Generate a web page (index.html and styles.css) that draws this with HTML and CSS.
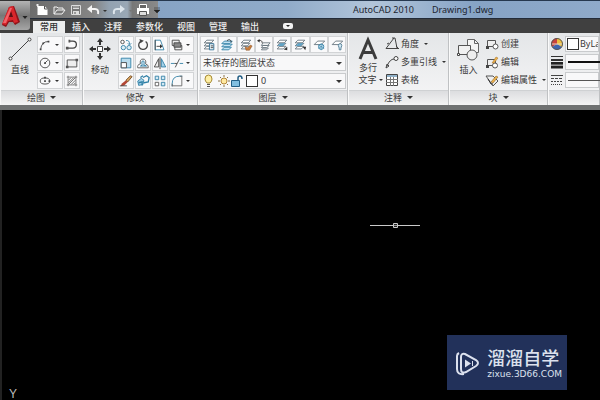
FILE: index.html
```html
<!DOCTYPE html>
<html lang="zh-CN">
<head>
<meta charset="utf-8">
<title>AutoCAD 2010 - Drawing1.dwg</title>
<link rel="stylesheet" href="styles.css">
</head>
<body>
<header class="top">
  <button class="app" aria-label="应用程序菜单">
    <svg width="30" height="28" viewBox="0 0 30 28"><path d="M2 23 9 5l5-1 6 16-5 3-2-3H9l-3 5z" fill="#8f1319"/><path d="M2 22 9 5l4-1 5 16-4 1-1-3-5 1-2 4z" fill="#d9262c"/><path d="m9 15 2-6 2 6z" fill="#5d1014"/><path d="m3 21 7-15h2L6 21z" fill="#f0646a"/><path d="M22.500 14h5l-2.500 3z" fill="#222"/></svg>
  </button>
  <div class="title-bar">
    <div class="quick">
      <button aria-label="新建"><svg width="14" height="14" viewBox="0 0 14 14"><path d="M2.500 3h7l3 3v6h-10z" fill="#fff"/><path d="M9.500 3v3h3" stroke="#555" fill="none"/><path d="M1 2h3M2.500 1v3" stroke="#eee"/></svg></button>
      <button aria-label="打开"><svg width="14" height="14" viewBox="0 0 14 14"><path d="M2 11V4h3l1 1h5v2M2 11l3-4h8l-3 4z" fill="#777" stroke="#f2f2f2"/></svg></button>
      <button aria-label="保存"><svg width="14" height="14" viewBox="0 0 14 14"><path d="M2.500 2.500h9v9h-9z" fill="#777" stroke="#ddd"/><path d="M4 2h6v4H4zM4 8h6v3H4z" fill="#ddd"/><path d="M4 4h6M6 9v2" stroke="#555"/></svg></button>
      <button class="wide" aria-label="放弃"><svg width="22" height="14" viewBox="0 0 22 14"><path d="M4 6h5q4 0 3 5" fill="none" stroke="#f5f5f5" stroke-width="2"/><path d="M6 2v8L1 6z" fill="#f5f5f5"/><path d="M17 7h4l-2 2z" fill="#333"/></svg></button>
      <button class="wide" aria-label="重做"><svg width="22" height="14" viewBox="0 0 22 14"><path d="M11 6H6Q2 6 3 11" fill="none" stroke="#dde5ec" stroke-width="2"/><path d="M9 2v8l5-4z" fill="#dde5ec"/><path d="M18 7h3l-1 2z" fill="#777"/></svg></button>
      <button aria-label="打印"><svg width="14" height="14" viewBox="0 0 14 14"><path d="M3.500 5V1.500h7V5" fill="#666" stroke="#fff"/><path d="M1 5h12v6H1z" fill="#fff"/><path d="M3.500 8.500h7v4h-7z" fill="#ddd" stroke="#555"/></svg></button>
      <button class="slim" aria-label="自定义快速访问工具栏"><svg width="8" height="14" viewBox="0 0 8 14"><path d="M1 5h6M1 7h6L4 10z" fill="#222" stroke="#222" stroke-width=".5"/></svg></button>
    </div>
    <h1 class="title"><span>AutoCAD 2010</span><span>Drawing1.dwg</span></h1>
  </div>
  <nav class="tabs">
    <a class="active" href="#">常用</a><a href="#">插入</a><a href="#">注释</a><a href="#">参数化</a><a href="#">视图</a><a href="#">管理</a><a href="#">输出</a>
    <button class="minimize" aria-label="最小化功能区"><svg width="10" height="6" viewBox="0 0 10 6"><rect width="10" height="6" rx="2" fill="#f2f2f2"/><path d="M3 2h4L5 4z" fill="#222"/></svg></button>
  </nav>
</header>

<main class="ribbon">
  <section class="panel draw">
    <div class="body">
      <button class="large"><svg width="24" height="26" viewBox="0 0 24 26"><path d="M3 22 21 4" stroke="#444"/><circle cx="2.500" cy="22.500" r="1.500" fill="#fff" stroke="#444"/><circle cx="21.500" cy="3.500" r="1.500" fill="#fff" stroke="#444"/></svg><span>直线</span></button>
      <div class="tools">
        <button class="split" aria-label="圆弧"><svg width="16" height="16" viewBox="0 0 16 16"><path d="M3 13Q4 4 12 4" fill="none" stroke="#444"/><path d="M2 12h2v2H2zM5 5h2v2H5zM11 3h2v2h-2z" fill="#444"/></svg></button>
        <button aria-label="多段线"><svg width="16" height="16" viewBox="0 0 16 16"><path d="M5 3.500h4q4 0 4 4t-4 4H2" fill="none" stroke="#444" stroke-width="1.500"/><path d="M1 10h3v3H1zM4 2h2v3H4z" fill="#555"/></svg></button>
        <button class="split" aria-label="圆"><svg width="16" height="16" viewBox="0 0 16 16"><circle cx="8" cy="8" r="5.500" fill="none" stroke="#444"/><path d="m8 8 3-3" stroke="#444"/><path d="M7 7h2v2H7z" fill="#444"/></svg></button>
        <button aria-label="矩形"><svg width="16" height="16" viewBox="0 0 16 16"><path d="M2.500 4.500h11v8h-11z" fill="#eee" stroke="#444"/><path d="M1 11h3v3H1zM12 3h3v3h-3z" fill="#555"/></svg></button>
        <button class="split" aria-label="椭圆"><svg width="16" height="16" viewBox="0 0 16 16"><ellipse cx="8" cy="8" rx="5.500" ry="3.500" fill="none" stroke="#444"/><path d="M7 7h2v2H7zM7 3h2v2H7zM12 7h2v2h-2z" fill="#444"/></svg></button>
        <button aria-label="图案填充"><svg width="16" height="16" viewBox="0 0 16 16"><path d="M3.500 2v12M12.500 2v12M2 3.500h12M2 12.500h12" stroke="#777"/><path d="m4 7 3-3M4 10l6-6M4 12l8-8M7 12l5-5M10 12l2-2" stroke="#666"/></svg></button>
      </div>
    </div>
    <button class="caption">绘图</button>
  </section>

  <section class="panel modify">
    <div class="body">
      <button class="large"><svg width="24" height="26" viewBox="0 0 24 26"><path d="M9.500 10.500h5v5h-5z" fill="#fff" stroke="#444"/><path d="M12 2 9 6h2v3h2V6h2zM12 24l-3-4h2v-3h2v3h2zM1 13l4-3v2h3v2H5v2zM23 13l-4-3v2h-3v2h3v2z" fill="#333"/></svg><span>移动</span></button>
      <div class="tools">
        <button aria-label="复制"><svg width="16" height="16" viewBox="0 0 16 16"><circle cx="4" cy="4.500" r="2" fill="#fff" stroke="#444"/><circle cx="5" cy="11" r="2.500" fill="#dcedf5" stroke="#2f7fa5"/><circle cx="11.500" cy="11" r="2.500" fill="#dcedf5" stroke="#2f7fa5"/><path d="M8 3q4-1 4 4m-2-1 2 2 2-2" fill="none" stroke="#2f7fa5"/></svg></button>
        <button aria-label="旋转"><svg width="16" height="16" viewBox="0 0 16 16"><path d="M6 3.500a5 5 0 1 0 5 .5" fill="none" stroke="#444" stroke-width="1.500"/><path d="m4 1 5 2-4 3z" fill="#444"/></svg></button>
        <button aria-label="拉伸"><svg width="16" height="16" viewBox="0 0 16 16"><path d="M2.500 2.500h6l4 11h-10z" fill="#fff" stroke="#2f7fa5"/><path d="M2.500 2v12" stroke="#444"/><path d="M4 9.500h4" stroke="#333"/><path d="m8 7 3 2.500L8 12z" fill="#333"/></svg></button>
        <button class="split" aria-label="前置"><svg width="16" height="16" viewBox="0 0 16 16"><path d="M2.500 2.500h8v6h-8zM5.500 8.500h8v5h-8z" fill="#eee" stroke="#444"/><path d="M4.500 5.500h8v5h-8z" fill="#888" stroke="#444"/></svg></button>
        <button aria-label="缩放"><svg width="16" height="16" viewBox="0 0 16 16"><path d="M2.500 2.500h11v11h-11z" fill="#b9dced" stroke="#2f7fa5"/><path d="M2.500 7.500h6v6h-6z" fill="#fff" stroke="#444"/></svg></button>
        <button aria-label="偏移"><svg width="16" height="16" viewBox="0 0 16 16"><path d="M2 13.500h12q1-3-3-4.500 1-5.500-3-5.500T5 9q-4 1-3 4.500z" fill="none" stroke="#555"/><path d="M5 11.500h7q-2-1-3-1 1-5-1-5t-1 5z" fill="#d4e9f4" stroke="#2f7fa5"/></svg></button>
        <button aria-label="镜像"><svg width="16" height="16" viewBox="0 0 16 16"><path d="M6.500 3v9.500h-5z" fill="#eee" stroke="#444"/><path d="M9.500 3v9.500h5z" fill="#a5d1e8" stroke="#2f7fa5"/><path d="M8 1v14" stroke="#333"/></svg></button>
        <button class="split" aria-label="修剪"><svg width="16" height="16" viewBox="0 0 16 16"><path d="M1 8.500h4m6 0h4" stroke="#2f7fa5"/><path d="M5 8.500h3M6 13 11 3" stroke="#444"/></svg></button>
        <button aria-label="删除"><svg width="16" height="16" viewBox="0 0 16 16"><path d="m8 7 5-5 2 1-5 6z" fill="#d9a35d" stroke="#704a24"/><path d="m3 11 5-4 2 2-4 4-4 1z" fill="#b34735"/><path d="M1 13.500h8" stroke="#444"/></svg></button>
        <button aria-label="分解"><svg width="16" height="16" viewBox="0 0 16 16"><path d="m2 8 4-3 3 2-1 5-5 1z" fill="#a5d1e8" stroke="#2f7fa5"/><path d="m8 4 4-2 3 2-1 5-5 1M5 4l3-2M3 10l4-1v4" fill="none" stroke="#2f7fa5" stroke-width="1.500"/></svg></button>
        <button aria-label="阵列"><svg width="16" height="16" viewBox="0 0 16 16"><path d="M2.500 2.500h4v4h-4zM9.500 2.500h4v4h-4zM9.500 9.500h4v4h-4z" fill="#d4e9f4" stroke="#2f7fa5"/><path d="M2.500 9.500h4v4h-4z" fill="#fff" stroke="#555"/></svg></button>
        <button class="split" aria-label="圆角"><svg width="16" height="16" viewBox="0 0 16 16"><path d="M2.500 14v-3Q2.500 2.500 11 2.500h3" fill="none" stroke="#2f7fa5"/><path d="M2.500 14v-3M11 2.500h3M2 13.500h11.500V3" fill="none" stroke="#666"/></svg></button>
      </div>
    </div>
    <button class="caption">修改</button>
  </section>

  <section class="panel layers">
    <svg class="defs" width="0" height="0"><symbol id="sheets" viewBox="0 0 16 16"><path d="m5.500 2.500h8l-3 3h-8zM5.500 6h7l-3 3h-7zM5.500 9.500h7l-3 3h-7z" fill="#fff" stroke="#66747d"/></symbol></svg>
    <div class="body">
      <div class="row">
        <button aria-label="图层特性"><svg width="16" height="16" viewBox="0 0 16 16"><use href="#sheets"/><path d="M8.500 6.500h5v7h-5z" fill="#e8f3f8" stroke="#2f6f96"/><path d="M10 9h3m-3 2h3" stroke="#444"/></svg></button>
        <button aria-label="置为当前"><svg width="16" height="16" viewBox="0 0 16 16"><path d="m5 3.500h9l-3 3H2zM5 7h9l-3 3H2zM5 10.500h8l-3 3H2z" fill="#c5e2f1" stroke="#2f7fa5"/><path d="M8 3q4-3 5 2" fill="none" stroke="#333"/></svg></button>
        <button aria-label="匹配"><svg width="16" height="16" viewBox="0 0 16 16"><use href="#sheets"/><path d="m7 10 3 1 3-3 2 1-3 5H8z" fill="#c97d3c" stroke="#7d4a22" stroke-width=".5"/></svg></button>
        <button aria-label="上一个"><svg width="16" height="16" viewBox="0 0 16 16"><path d="m7 5.500h8l-3 3H5zM7 8.500h7l-3 2.500H5zM7 11.500h6l-2 2H5z" fill="#fff" stroke="#66747d"/><path d="M2 3q4-1 4 3" fill="none" stroke="#333"/><path d="m0 3 3-2v4z" fill="#333"/></svg></button>
        <button aria-label="隔离"><svg width="16" height="16" viewBox="0 0 16 16"><use href="#sheets"/><path d="m3 9 3-3h6L9 9z" fill="#5fa3c6"/><path d="m10 13 4-3v4z" fill="#333"/></svg></button>
        <button aria-label="取消隔离"><svg width="16" height="16" viewBox="0 0 16 16"><use href="#sheets"/><path d="m3 9 3-3h6L9 9z" fill="#5fa3c6"/><path d="M11 10h4l-1 4z" fill="#333"/></svg></button>
        <button aria-label="冻结"><svg width="16" height="16" viewBox="0 0 16 16"><path d="m6.500 3.500h8l-4 4h-8z" fill="#fff" stroke="#66747d"/><circle cx="10.500" cy="10" r="3" fill="#d4e9f4" stroke="#2f7fa5"/><path d="M10.500 6v8M7 8l7 4M14 8l-7 4" stroke="#2f7fa5" stroke-width=".6"/></svg></button>
        <button aria-label="关闭"><svg width="16" height="16" viewBox="0 0 16 16"><path d="m6.500 3.500h8l-4 4h-8z" fill="#fff" stroke="#66747d"/><path d="M9.500 8.500q0-2 2-2t2 2l-1 3v2h-2v-2z" fill="#d4e9f4" stroke="#4a7890"/></svg></button>
      </div>
      <div class="combo"><select aria-label="图层状态"><option>未保存的图层状态</option></select></div>
      <div class="combo">
        <svg width="44" height="14" viewBox="0 0 44 14"><path d="M4 5q0-4 3.500-4T11 5q0 2-2 4H6Q4 7 4 5z" fill="#ffefa4" stroke="#a58a35"/><path d="M6 10.500h3M6 12.500h3" stroke="#555"/><circle cx="23" cy="7" r="3" fill="#ffe9a0" stroke="#b3873a"/><path d="M23 1v2m0 8v2M17 7h2m8 0h2M19 3l1 1m6 6 1 1m0-8-1 1m-6 6-1 1" stroke="#8b7448"/><path d="M30.500 6.500h8v6h-8z" fill="#82bfe0" stroke="#235f85"/><path d="M37 6V4q0-2 2-2t2 3" fill="none" stroke="#235f85" stroke-width="1.500"/></svg>
        <i class="swatch"></i><select aria-label="图层"><option>0</option></select>
      </div>
    </div>
    <button class="caption">图层</button>
  </section>

  <section class="panel notes">
    <div class="body">
      <button class="large text"><svg width="24" height="26" viewBox="0 0 24 26"><path d="M4 23 12 4l8 19M7 16.500h10" fill="none" stroke="#3c3c3c" stroke-width="3"/></svg><span>多行</span><span class="drop">文字</span></button>
      <div class="list">
        <button><svg width="14" height="14" viewBox="0 0 14 14"><path d="M9 1 1 11.500h13M7 1h3l2 10" fill="none" stroke="#444"/><path d="m4 6-2 1m9 2 2 2" stroke="#444"/></svg><span class="drop">角度</span></button>
        <button><svg width="14" height="14" viewBox="0 0 14 14"><path d="m1 13 1-4 2 2zM2 11q3-7 7-7" fill="none" stroke="#444"/><circle cx="11" cy="3.500" r="2" fill="#fff" stroke="#444"/></svg><span class="drop">多重引线</span></button>
        <button><svg width="14" height="14" viewBox="0 0 14 14"><path d="M1.500 1.500h11v11h-11z" fill="#fff" stroke="#444"/><path d="M2 3h10" stroke="#8fb0c8" stroke-width="2"/><path d="M5.500 4v9m3-9v9M1 6.500h12M1 9.500h12" stroke="#777"/></svg><span>表格</span></button>
      </div>
    </div>
    <button class="caption">注释</button>
  </section>

  <section class="panel block">
    <div class="body">
      <button class="large"><svg width="24" height="26" viewBox="0 0 24 26"><path d="M11.500 3.500h7l4 4v9h-11z" fill="#f5f5f5" stroke="#666"/><path d="M18.500 3.500v4h4" fill="none" stroke="#666"/><path d="M2.500 9.500h12v9h-12z" fill="#f1f1f1" stroke="#555"/><circle cx="16" cy="19" r="5" fill="#eee" stroke="#555"/><path d="M1.500 17.500h2v2h-2z" fill="#fff" stroke="#444"/></svg><span>插入</span></button>
      <div class="list">
        <button><svg width="14" height="14" viewBox="0 0 14 14"><path d="M2.500 3.500h8v6h-8z" fill="#eee" stroke="#555"/><circle cx="10.500" cy="9.500" r="2.500" fill="#fff" stroke="#555"/><path d="M1 9h3v3H1z" fill="#444"/></svg><span>创建</span></button>
        <button><svg width="14" height="14" viewBox="0 0 14 14"><path d="M2.500 4.500h8v6h-8z" fill="#eee" stroke="#555"/><circle cx="10" cy="10.500" r="2.500" fill="#fff" stroke="#555"/><path d="m7 8 4-6 2 1-4 5z" fill="#eeb24b" stroke="#a06d24" stroke-width=".5"/><path d="M1 10h3v3H1z" fill="#444"/></svg><span>编辑</span></button>
        <button><svg width="14" height="14" viewBox="0 0 14 14"><path d="M1 3h7l5 5-5 5z" fill="#eee" stroke="#555"/><path d="m6 9 5-6 2 1-5 6z" fill="#eeb24b" stroke="#79551f" stroke-width=".5"/><path d="m3 6 3 5h2" fill="none" stroke="#333"/></svg><span class="drop">编辑属性</span></button>
      </div>
    </div>
    <button class="caption">块</button>
  </section>

  <section class="panel props">
    <div class="body">
      <div class="prop"><svg width="14" height="14" viewBox="0 0 14 14"><path d="M7 7V1a6 6 0 0 1 5 9z" fill="#edbd3e"/><path d="M7 7V1a6 6 0 0 0-5 9z" fill="#c8423c"/><path d="m7 7 5 3a6 6 0 0 1-10 0z" fill="#3e65ae"/><path d="M1 7h12" stroke="#e5d6c5"/><circle cx="7" cy="7" r="5.500" fill="none" stroke="#555"/></svg><div class="combo"><i class="swatch"></i><select aria-label="对象颜色"><option>ByLayer</option></select></div></div>
      <div class="prop"><svg width="14" height="14" viewBox="0 0 14 14"><path d="M1 1.500h12" stroke="#333"/><path d="M1 5h12" stroke="#333" stroke-width="2"/><path d="M1 8.500h12M1 12h12" stroke="#222" stroke-width="3"/><path d="M1 10h12" stroke="#aaa"/></svg><div class="combo"><i class="sample"></i><select aria-label="线宽"><option>ByLayer</option></select></div></div>
      <div class="prop"><svg width="14" height="14" viewBox="0 0 14 14"><path d="M1 2.500h12" stroke="#444"/><path d="M1 5.500h12" stroke="#444" stroke-dasharray="3 1"/><path d="M1 8.500h12" stroke="#444" stroke-dasharray="2 1"/><path d="M1 11.500h12" stroke="#444" stroke-dasharray="1 1"/></svg><div class="combo"><i class="sample thin"></i><select aria-label="线型"><option>ByLayer</option></select></div></div>
    </div>
    <button class="caption" aria-label="特性"></button>
  </section>
</main>

<section class="canvas" aria-label="绘图区">
  <svg class="cursor" width="50" height="7" viewBox="0 0 50 7"><path d="M0 3.500h50" stroke="#c9c9c9"/><path d="M23.500 1.500h4v4h-4z" fill="#222" stroke="#c9c9c9"/><path d="M24 3.500h3" stroke="#999"/></svg>
  <span class="axis">Y</span>
  <div class="brand">
    <svg width="26" height="26" viewBox="0 0 26 26"><path d="M10 24q-7 1-7-5V6q0-2 2-3M7 7q0-4 4-3l11 6q4 3 0 6l-10 6q-5 2-5-3z" fill="none" stroke="#dce1ee" stroke-width="2"/><path d="M11 9.500v8l6-4z" fill="#dce1ee"/><path d="M18.500 11v5" stroke="#dce1ee"/></svg>
    <div><strong>溜溜自学</strong><small>zixue.3D66.COM</small></div>
  </div>
</section>
</body>
</html>
```
FILE: styles.css
```css
* { box-sizing: border-box; }
body {
  margin: 0;
  min-height: 100vh;
  display: flex;
  flex-direction: column;
  overflow: hidden;
  background: #000;
  color: #3a3a3a;
  font: 9px/12px "Noto Sans", "Noto Sans CJK SC", sans-serif;
}
button, select {
  margin: 0;
  padding: 0;
  border: 0;
  background: none;
  color: inherit;
  font: inherit;
  appearance: none;
}
svg { display: block; flex: none; }
.defs { position: absolute; }

.top {
  display: grid;
  grid-template-columns: 30px 1fr;
  background: #404040;
}
.app {
  grid-row: span 2;
  height: 30px;
  border-radius: 0 0 3px 0;
  border-top: 1px solid #333;
  background: linear-gradient(#b4b4b4, #777 50%, #a6a6a6);
}
.title-bar {
  display: flex;
  height: 19px;
  border-top: 1px solid #26384f;
  border-bottom: 1px solid #232b38;
  background: linear-gradient(90deg, #7e9cc0, #90abc9 45%, #b2c5da 60%, #86a3c5 78%, #8faaca);
}
.quick {
  display: flex;
  align-items: center;
  gap: 3px;
  padding-left: 5px;
  width: 128px;
  background: linear-gradient(90deg, #6c6c6c, #858585 50%, #93a2b1 62%, #9aa8b6 76%, #777 80%, #8a8a8a);
}
.title {
  display: flex;
  gap: 18px;
  margin: 0;
  padding-left: 195px;
  color: #1c2430;
  font: 9px/17px "Noto Sans", sans-serif;
  white-space: nowrap;
}
.tabs {
  display: flex;
  align-items: flex-end;
  height: 14px;
  padding-left: 3px;
}
.tabs a {
  padding: 0 7px;
  color: #eee;
  font-weight: 500;
  text-decoration: none;
}
.tabs .active { background: #eceded; color: #333; }
.minimize { margin: 0 0 4px 17px; }

.ribbon {
  display: flex;
  border-bottom: 5px solid #707272;
  background: #e9eaec;
  overflow: hidden;
}
.panel {
  flex: none;
  display: flex;
  flex-direction: column;
  border-right: 1px solid #bfc1c3;
  border-left: 1px solid #fafafa;
  background: linear-gradient(#e4e6e8, #f6f6f7);
}
.draw { width: 83px; }
.modify { width: 115px; }
.layers { width: 150px; }
.notes { width: 101px; }
.block { width: 99px; }
.props { flex: 1; min-width: 0; }
.body {
  display: flex;
  gap: 2px;
  height: 57px;
  padding: 3px 1px 0 4px;
}
.caption {
  height: 15px;
  border-top: 1px solid #cfd1d3;
  background: linear-gradient(#dcdddf, #f4f4f4);
}
.caption:not(:empty)::after, .drop::after {
  content: "";
  display: inline-block;
  margin-left: 5px;
  border: 3px solid transparent;
  border-top-color: #333;
  border-bottom: 0;
  vertical-align: 2px;
}
.drop::after { border-width: 2px 2px 0; }
.large {
  display: flex;
  flex-direction: column;
  align-items: center;
  width: 30px;
}
.large span { margin-top: 2px; }
.large.text span { margin-top: 0; white-space: nowrap; }
.text .drop { margin-left: 5px; }
.text .drop::after { margin-left: 2px; }
.tools {
  display: grid;
  grid-template-columns: 26px 16px;
  grid-auto-rows: 17px;
  gap: 1px;
  align-content: start;
}
.modify .tools { grid-template-columns: 16px 16px 16px 25px; }
.modify .body { padding-left: 1px; gap: 3px; }
.tools button, .row button {
  display: flex;
  align-items: center;
  border: 1px solid #d2d4d6;
  background: #f9f9fa;
}
.tools svg, .row svg { width: 14px; height: 14px; }
.split { justify-content: space-between; }
.split::after {
  content: "";
  margin-right: 3px;
  border: 2px solid transparent;
  border-top-color: #333;
  border-bottom: 0;
}
.layers .body {
  flex-direction: column;
  gap: 2px;
  padding-left: 1px;
}
.row {
  display: grid;
  grid-template-columns: repeat(8, 1fr);
  height: 17px;
}
.row button { justify-content: center; }
.combo {
  display: flex;
  align-items: center;
  flex: 1;
  min-width: 0;
  height: 16px;
  border: 1px solid #c9cbcd;
  background: #f8f8f9;
  position: relative;
}
.layers .combo { flex: none; }
.combo select { flex: 1; min-width: 0; padding-left: 2px; }
.layers .combo::after {
  content: "";
  position: absolute;
  right: 3px;
  border: 3px solid transparent;
  border-top-color: #333;
  border-bottom: 0;
  pointer-events: none;
}
.swatch {
  flex: none;
  width: 12px;
  height: 12px;
  margin: 0 1px;
  border: 1px solid #333;
  background: #fff;
}
.list {
  display: flex;
  flex-direction: column;
  align-items: flex-start;
  gap: 4px;
  padding-top: 1px;
}
.list button {
  display: flex;
  align-items: center;
  gap: 2px;
  height: 14px;
  white-space: nowrap;
}
.props .body {
  flex-direction: column;
  padding: 3px 0 0 1px;
}
.prop { display: flex; align-items: center; gap: 1px; }
.props .combo select { padding-left: 0; }
.sample {
  flex: none;
  width: 60px;
  margin-left: 2px;
  border-top: 2px solid #111;
}
.thin { border-top: 1px solid #555; }

.canvas {
  flex: 1;
  position: relative;
  border-left: 2px solid #222;
  background: #000;
}
.cursor { position: absolute; left: 61.5%; top: 38.5%; }
.axis {
  position: absolute;
  left: 7px;
  bottom: 0;
  color: #bbb;
  font: 12px/12px "Liberation Sans", sans-serif;
}
.brand {
  position: absolute;
  right: 33px;
  bottom: 10px;
  display: flex;
  align-items: center;
  gap: 7px;
  padding: 10px 5px 10px 7px;
  background: #22315a;
  color: #dce1ee;
}
.brand strong, .brand small { display: block; white-space: nowrap; }
.brand strong { font: 500 18px/24px "Noto Sans CJK SC", sans-serif; }
.brand small { font: 9px/11px "DejaVu Sans", sans-serif; }
```
